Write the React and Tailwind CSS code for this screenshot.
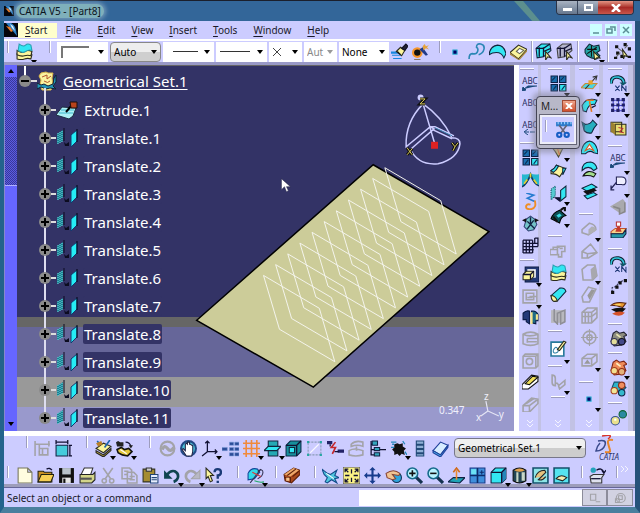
const ink = { fill: "none", stroke: "#111133", strokeWidth: 1.2 };
const gray = { fill: "none", stroke: "#a3a3a8", strokeWidth: 1.5 };
const cyan = { fill: "#33e6f2", stroke: "#10253c", strokeWidth: 1 };
const yellow = { fill: "#fbf59c", stroke: "#2b2b1c", strokeWidth: 1 };
const navy = { fill: "#243a78", stroke: "#0b1a44", strokeWidth: 1 };

const shapes = {
  layers: (
    <>
      <path d="M1 10q4 3 7 1t7 0l-1 4q-3-1-6 0t-7 0z" {...yellow} />
      <path d="M1 7q4 3 7 1t7 0l-1 4q-3-1-6 0t-7-1z" {...yellow} />
      <path d="M3 1q4 3 6 1t5 0l1 5q-3-1-6 1t-7-1z" {...cyan} stroke="#2a9fb0" />
    </>
  ),
  brush: (
    <>
      <path d="M0 8h9v2H0zM1 11h9v1H1zM2 14h8v1H2z" fill="#1787e0" />
      <path d="M5 8l4-4 4 3-3 5z" {...yellow} />
      <path d="M10 5l4-4 2 2-3 4zM6 8l3 3" fill="#223" stroke="#112" />
    </>
  ),
  wizard: (
    <>
      <circle cx="5" cy="9" r="5" fill="#f7962b" />
      <circle cx="5" cy="9" r="3" fill="#111" />
      <path d="M7 6l3-2 5 7-2 1z" fill="#223a88" />
      <path d="M10 3l2-2 1 2 3-1-2 2 2 2-3-1-2 2z" fill="#e5a33b" />
      <path d="M2 15h6v1H2z" fill="#876" />
    </>
  ),
  dot: <path d="M5.500 6.500h4v4h-4z" fill="#000066" stroke="#2fb6d6" />,
  curve: <path d="M1 15q0-5 3-5 4 1 5-2t-1-4q0-4 4-3 4 1 3 5t-5 5" fill="none" stroke="#2b87b5" strokeWidth="1.500" />,
  fan: <path d="M0 11Q1 3 8 2q6 0 8 8l-2 4q-2-5-7-5-4 0-7 2z" {...cyan} />,
  slab: (
    <>
      <path d="M0 9l8-7 8 4-8 9z" {...yellow} />
      <path d="M8 15l8-9v2l-7 8zM0 9l8 6v1L0 11z" fill="#a8873e" />
      <path d="M6 8l3-3 4 2-4 3z" fill="#fff" stroke="#665" />
    </>
  ),
  boxCyan: (
    <>
      <path d="M1 5l5-4h8l1 6-7 6-6 1z" {...cyan} />
      <path d="M4 4v9M8 4v9M1 5h7l6-4M8 8l7-3" {...ink} />
      <path d="M10 8l5 6-3-1-2 3z" {...yellow} />
    </>
  ),
  boxGray: (
    <>
      <path d="M1 5l5-4h8l1 6-7 6-6 1z" fill="#b5b5cc" stroke="#444" />
      <path d="M4 4v9M8 4v9M1 5h7l6-4M8 8l7-3" {...ink} />
      <path d="M10 8l5 6-3-1-2 3z" {...yellow} />
    </>
  ),
  gears: (
    <>
      <path d="M1 6l4-5 4 2 5-1 1 5-3 2 3 3-3 3-5-1-4-2-2-3z" fill="#23a3a5" stroke="#102a3a" />
      <path d="M3 6h9M7 2v11M3 10l9-6" stroke="#111" fill="none" />
      <path d="M9 8l6 6-3 0-2 2z" {...yellow} />
    </>
  ),
  scatter: (
    <>
      <path d="M1 2h3v3H1zM9 0h3v3H9zM13 4h3v3h-3zM2 8h3v3H2zM0 13h3v2H0zM6 11h3v3H6zM13 12h3v2h-3z" fill="#111" />
      <path d="M2 13l4-4M10 5l3-3M4 5l4 3" stroke="#666" />
      <path d="M8 6l5 7-3-1-1 3z" {...yellow} />
    </>
  ),
  windows: (
    <>
      <path d="M1 1h6v6H1zM9 1h6v6H9zM1 9h6v6H1z" fill="#1b6fb0" stroke="#0b1f44" />
      <path d="M9 9h6v6H9z" {...cyan} />
      <path d="M2 5l3-3M10 5l3-3M3 14l3-4M11 14l3-4" stroke="#0b2f55" />
    </>
  ),
  fold: (
    <>
      <path d="M0 3q5 1 8-1 3 2 8 1v10q-5-1-8-7-3 6-8 9z" fill="#26b8cf" />
      <path d="M0 15q5-3 8-12 3 9 8 11" fill="none" stroke="#123a66" strokeWidth="1.500" />
      <path d="M8 2v4M5 8l-3 4M11 8l3 4" stroke="#e9d02c" strokeWidth="1.500" />
    </>
  ),
  squiggle: (
    <>
      <path d="M4 0l7 2-6 3 7 3" fill="none" stroke="#267bd0" strokeWidth="1.500" />
      <path d="M12 7q2 7-3 8-6 1-5-3 1-2 4-1" fill="none" stroke="#ee8e26" strokeWidth="1.800" />
    </>
  ),
  network: (
    <>
      <path d="M4 4l4-3 4 3 2 5-3 5-5 1-4-4z" fill="#74c4c8" stroke="#347" />
      <path d="M5 6l3 3 3-4M8 9l-3 4M8 9l4 4M8 2v7" stroke="#124" strokeWidth="1.300" fill="none" />
      <path d="M0 5l4-2v4zM16 5l-4-2v4z" fill="#111" />
    </>
  ),
  mesh: (
    <path d="M1 3h9M1 6h14M1 9h14M1 12h10M1 15h9M1 3v12M4 3v12M7 3v12M10 3v12M12 1h3v8M12 1v5" {...ink} />
  ),
  pad: (
    <>
      <path d="M3 1h13v14H3z" {...navy} />
      <path d="M5 3h8v8H5z" fill="#fff" />
      <path d="M1 8l3-3h7v5l-3 3H1z" {...yellow} />
      <path d="M1 8h7l3-3M8 8v5" {...ink} />
    </>
  ),
  pocket: (
    <>
      <path d="M1 2h13v12H1zM4 5h7v6H4zM7 8h7" {...gray} />
      <path d="M5 9h5" {...gray} />
    </>
  ),
  shaft: (
    <>
      <path d="M1 4q3-3 6-2v12l-3-2v-2H1z" {...navy} />
      <path d="M9 2q4-1 6 3v6h-2v3l-4-1z" fill="#1f6b86" stroke="#0b1a44" />
      <path d="M8 3h2v11H8zM13 5h2v5h-2z" fill="#f6e58d" />
    </>
  ),
  groove: <path d="M1 4q7-4 14 0v9q-7 3-14 0zM1 4q6 3 14 0M5 8h10M5 11h9M5 8v4" {...gray} />,
  hole: (
    <>
      <path d="M1 4l2-2h12v11l-2 2H1zM1 4h12v11M13 4l2-2" {...gray} />
      <circle cx="7" cy="9" r="3" {...gray} />
    </>
  ),
  rib: (
    <>
      <path d="M0 11l9-9 6 1v5l-9 7H0z" fill="#fff" stroke="#111" />
      <path d="M3 10l7-7 5 1-8 7z" fill="#f0df5a" stroke="#111" />
    </>
  ),
  slot: <path d="M1 10l8-7 6 1v4l-8 8H1zM1 10h6v6M7 10l8-6M4 8l8-5" {...gray} />,
  yellowFold: (
    <>
      <path d="M1 7q3-1 5-5l8 3q-2 4-5 8-3-3-8-3z" {...yellow} />
      <path d="M1 7q3-1 5-5l2 1q-2 4-5 6zM12 5l3 0-3 6z" {...cyan} />
    </>
  ),
  brownFold: (
    <>
      <path d="M1 5l6 2 6-2-5 10-3-5z" fill="#d1bd77" stroke="#443" />
      <path d="M7 7l2 6" stroke="#e3662b" />
    </>
  ),
  translate: (
    <>
      <path d="M1 4l4-3v9l-4 4z" fill="#56cad1" stroke="#156" strokeDasharray="1 1" />
      <path d="M5 12l4 3v-3z" fill="#111133" stroke="#111133" />
      <path d="M10 5l5-4v10l-5 4z" {...cyan} />
    </>
  ),
  extrap: (
    <>
      <path d="M1 11q2-6 8-8l6 5q-5 1-6 7z" fill="#0c4f55" stroke="#000" />
      <path d="M3 9l4 5M10 3l4-3v4" stroke="#111" strokeWidth="2" fill="none" />
      <path d="M6 8l3-2 2 2-3 2z" fill="#38d9e2" />
    </>
  ),
  wallGray: <path d="M0 7h7v5H0zM7 7V4h7v5h-3v5H8v-3M3 7V5h6M9 6h3" {...gray} />,
  roll: (
    <>
      <path d="M1 9l8-7q5-1 6 3l-8 9q-5 2-6-5z" {...cyan} />
      <path d="M1 9q4 0 6 5-6 2-6-5z" {...yellow} />
    </>
  ),
  shellGray: (
    <>
      <path d="M1 2h13v12H1z" fill="#b8b8be" />
      <path d="M4 1v11l3 3V5l7-3v11l-4 2V4" {...gray} stroke="#8f8f96" />
    </>
  ),
  sketch: (
    <>
      <path d="M1 2h12v13H1z" fill="#fff" stroke="#26789a" strokeWidth="1.500" />
      <path d="M3 10q2-5 4-2t-1 4-3-2" fill="none" stroke="#2d7fa6" />
      <path d="M7 9l6-8 2 1-6 8z" {...yellow} />
    </>
  ),
  chainGray: <path d="M2 2v7q0 3 3 3V5q0-3-3-3zM8 12l6-5v4l-5 4zM6 9l3 3" {...gray} />,
  axisSheet: (
    <>
      <path d="M0 12l4-4h11l-4 5z" fill="#49d4e3" stroke="#c78b35" />
      <path d="M4 13L14 2M11 2l4-1-1 4" stroke="#333" fill="none" />
      <path d="M7 5h4v4H7z" fill="#e7a22c" />
    </>
  ),
  sweep: (
    <>
      <path d="M1 8q4-8 14-5l-2 4q-6-1-8 7l-3-1z" {...cyan} />
      <path d="M8 4l2 10M5 3h7" stroke="#e27a25" strokeWidth="1.500" />
      <path d="M10 10l4-2" {...ink} />
    </>
  ),
  fill: (
    <>
      <path d="M1 4l3 2q5 0 7-4l4 4q-3 3-5 8-4 1-7-2z" {...cyan} fill="#25aebe" />
      <path d="M1 4l3 2-1 6z" fill="#0f5f78" />
    </>
  ),
  loft: (
    <>
      <path d="M0 13Q1 2 8 1q7 1 8 12l-4-1q-4-3-8 1z" {...cyan} />
      <path d="M4 10l4-6 4 6-4-2z" fill="#fff" stroke="#d95a1f" />
    </>
  ),
  blend: (
    <>
      <path d="M1 9q0-8 8-8 5 1 6 6l-3 2q-5-6-11 0z" {...cyan} />
      <path d="M2 14q4-7 12-2l-2 3q-4-2-10-1z" fill="#a4df8c" stroke="#111" />
    </>
  ),
  join: (
    <>
      <path d="M1 5l9-4 5 3-9 4z" {...cyan} />
      <path d="M2 8l10-3 3 2-9 4z" fill="#111" />
      <path d="M3 12l9-3 3 2-9 4z" {...cyan} />
    </>
  ),
  filletGray: (
    <>
      <path d="M1 9l7-6q6 1 6 6l-7 5-6-2z" {...gray} />
      <path d="M7 14V9l3-3q4 0 4 4z" fill="#b0b0b4" />
    </>
  ),
  chamferGray: <path d="M1 9l8-7 6 8-8 5H1zM1 9l5 2 9-1M6 11v4" {...gray} />,
  draftGray: (
    <>
      <path d="M1 5l5-4h7l2 10-4 4H2z" {...gray} />
      <path d="M9 5l5-4 1 10-5 4z" fill="#a8a8ae" />
    </>
  ),
  thickGray: (
    <>
      <path d="M1 10l6-9 7 2-6 12H2z" {...gray} />
      <path d="M6 9l4-6 3 1-5 9z" fill="#999" />
    </>
  ),
  cageGray: <path d="M1 5l5-4h9v9l-5 5H1zM1 5h9v10M10 5l5-4M4 5v10M7 5v10M1 9h9l5-4" {...gray} />,
  targetGray: (
    <>
      <circle cx="8" cy="8" r="6" {...gray} />
      <circle cx="8" cy="8" r="2.500" {...gray} />
      <path d="M8 0v16M0 8h16" {...gray} strokeWidth="1" />
    </>
  ),
  crateGray: (
    <>
      <path d="M1 7l5-4h9v7l-5 4H1zM1 7h9v7M10 7l5-4" {...gray} />
      <path d="M3 12l3-4 3 4z" fill="#999" />
    </>
  ),
  repeat: (
    <>
      <path d="M1 8Q1 1 8 2q5 1 5 6" fill="none" stroke="#123" strokeWidth="3.500" />
      <path d="M1 8Q1 1 8 2q5 1 5 6" fill="none" stroke="#2fc4d8" strokeWidth="1.500" />
      <path d="M9 7h7l-4 3z" fill="#156" />
      <path d="M5 10l4 5M9 10l-4 5M11 15v-5l4 5v-5" stroke="#223a77" fill="none" />
    </>
  ),
  pattern: (
    <>
      <path d="M2 3h12M2 8h12M2 13h12M3 2v12M8 2v12M13 2v12" stroke="#44c" />
      <path d="M1 1h3v3H1zM6 1h3v3H6zM11 1h3v3h-3zM1 6h3v3H1zM6 6h3v3H6zM11 6h3v3h-3zM1 11h3v3H1zM6 11h3v3H6zM11 11h3v3h-3z" fill="#202066" />
    </>
  ),
  copySet: (
    <>
      <path d="M1 3h10v9H1zM5 5h10v10H5z" {...yellow} fill="#e7dc74" />
      <path d="M1 3l4 2v10l-4-3z" fill="#9c8230" />
      <path d="M8 8l4 1-3 3 4 1" stroke="#b33" fill="none" />
    </>
  ),
  tag: (
    <>
      <path d="M6 1h5q4 0 4 4t-4 3H6z" fill="#eef" stroke="#225" />
      <path d="M6 6l-5 6M1 9v4h3" {...ink} stroke="#225" />
    </>
  ),
  coneGray: (
    <>
      <path d="M0 8l12-7 2 2v10l-5 1z" fill="#a9a9ad" />
      <path d="M3 8l6 2v5l5-2V4" {...gray} stroke="#888" />
    </>
  ),
  stamp: (
    <>
      <path d="M1 10l4-3h10l-3 5H1z" fill="#f5d48c" stroke="#c3522a" />
      <path d="M1 12h11l3-4v4l-3 4H1z" fill="#2799a8" stroke="#124" />
      <path d="M6 1h4v4H6z" fill="#fff" stroke="#b33" />
      <path d="M7 5h2l2 5H5z" fill="#c43a2b" />
    </>
  ),
  dots: (
    <>
      <path d="M2 13V9l4-1 2-4 6-2" stroke="#335" fill="none" strokeDasharray="2 1" />
      <path d="M1 12h3v3H1zM5 7h3v3H5zM8 3h3v3H8zM13 1h3v3h-3z" fill="#111" />
    </>
  ),
  stack: (
    <>
      <path d="M1 5q4-4 14-2l-3 4q-6-2-11-2z" fill="#e99a2f" stroke="#521" />
      <path d="M1 9q6-3 14-1l-3 3q-5 2-11-2z" fill="#111" />
      <path d="M2 13q6-4 12-1-4 5-12 1z" fill="#d5522a" />
      <path d="M5 4h5v1H5z" fill="#ffe676" />
    </>
  ),
  rocks: (
    <>
      <path d="M3 3l3-2 3 2 4-1 3 3-3 1 2 5-4 3-7 1-3-4z" fill="#8d8d80" stroke="#223" />
      <circle cx="4" cy="11" r="3" fill="#e2dd99" stroke="#335" />
      <circle cx="11" cy="11" r="3" fill="#444a88" stroke="#112" />
      <path d="M6 4l4 3" stroke="#e8e4b0" strokeWidth="1.500" />
    </>
  ),
  rocksOrange: (
    <>
      <path d="M3 3l3-2 3 2 4-1 3 3-3 1 2 5-4 3-7 1-3-4z" fill="#ee8b58" stroke="#7c2415" />
      <circle cx="4" cy="11" r="3" fill="#f3df8f" stroke="#a3401f" />
      <circle cx="11" cy="12" r="3" fill="#e4b27a" stroke="#8d2f18" />
      <path d="M6 4l4 3" stroke="#fff0c0" strokeWidth="1.500" />
    </>
  ),
  rocksCyan: (
    <>
      <path d="M4 2l5 0 6 5-3 3-7 1-3-4z" fill="#2db5ca" stroke="#14506b" />
      <circle cx="4" cy="10" r="3" fill="#f1e596" stroke="#a3401f" />
      <circle cx="11" cy="5" r="3" fill="#f08f5f" stroke="#8d2f18" />
      <circle cx="11" cy="12" r="3" fill="#34b9cc" stroke="#124" />
    </>
  ),
  spheres: (
    <>
      <circle cx="5" cy="11" r="4" fill="#eae08b" stroke="#33508c" />
      <circle cx="12" cy="5" r="3.500" fill="#2a8aa0" stroke="#163" />
      <path d="M4 9h2v2H4z" fill="#fff" />
    </>
  ),
  dimGray: <path d="M1 4h14M1 1v14M5 4v10M5 8h8v6H5zM8 8v6M14 1v5" {...gray} />,
  dim: (
    <>
      <path d="M1 5h11v10H1z" fill="#45cbdc" stroke="#124" />
      <path d="M1 2h11M1 0v4M12 0v4M14 5v10M13 5h3M13 15h3" {...ink} />
    </>
  ),
  book: (
    <>
      <path d="M1 8l7-5 7 3-7 6z" {...yellow} />
      <path d="M1 10l7 4 7-6v2l-7 6-7-4z" fill="#b6a13a" stroke="#222" />
      <path d="M9 7l5-7M2 1l3 3" stroke="#1a64b0" strokeWidth="1.500" />
      <path d="M1 3l5-2 1 3-4 2z" fill="#b97f28" />
    </>
  ),
  swap: (
    <>
      <path d="M0 2l2-1 2 1 3 0v4H1z" fill="#222" />
      <path d="M9 2q4 0 5 4" {...ink} />
      <path d="M12 5h4l-2 3z" fill="#222" />
      <path d="M1 9l4-2 3 2 4-1 3 3-4 4-5-1-4-2z" fill="#e2c73c" stroke="#111" strokeWidth="1.500" />
      <path d="M4 9l6 4" stroke="#fff" />
    </>
  ),
  swirl: (
    <>
      <circle cx="8" cy="8" r="6.500" {...gray} strokeWidth="2" />
      <path d="M3 9q2-5 5-1t6-1" {...gray} strokeWidth="3" />
    </>
  ),
  hand: (
    <>
      <circle cx="8" cy="8" r="7" fill="#4fc8dd" stroke="#234a86" strokeWidth="2" />
      <path d="M6 15l-4-6 1-1 2 2V4l1-1 1 1V2h2v2h1l1 1 1 0v6l-1 4z" fill="#fff" stroke="#224" />
    </>
  ),
  axes: <path d="M6 11V1M6 11h9M6 11l-5 4M4 3l2-2 2 2M13 9l2 2-2 2" {...ink} />,
  tree: (
    <path d="M0 7h5v3H0zM7 2h4v3H7zM12 2h4v3h-4zM7 7h4v3H7zM12 7h4v3h-4zM7 12h4v3H7zM12 12h4v3h-4z" fill="#2c4d99" stroke="#7a9ad8" strokeWidth="0.500" />
  ),
  grid: <path d="M3 0v16M8 0v16M13 0v16M0 3h16M0 8h16M0 13h16" fill="none" stroke="#f08a3c" strokeWidth="1.500" />,
  plane: (
    <>
      <path d="M4 1h9v14H4z" {...cyan} fill="#25a9b4" />
      <path d="M0 10l4-4h12l-4 4z" {...cyan} />
    </>
  ),
  cube: (
    <>
      <path d="M1 5l4-4h10v10l-4 4H1z" fill="#178f9c" stroke="#0b2c48" />
      <path d="M4 7h5v5H4z" {...cyan} />
      <path d="M1 5h10v10M11 5l4-4" {...ink} />
    </>
  ),
  box: (
    <>
      <path d="M1 5l4-4h10v10l-4 4H1z" {...cyan} />
      <path d="M11 5l4-4v10l-4 4z" fill="#2487bb" />
      <path d="M1 5h10v10M11 5l4-4" {...ink} />
    </>
  ),
  frame: (
    <>
      <path d="M2 2h12v12H2z" fill="none" stroke="#8a9ab8" strokeDasharray="2 1" />
      <path d="M1 1h2v2H1zM13 1h2v2h-2zM1 13h2v2H1zM13 13h2v2h-2z" fill="#28a7a4" />
      <path d="M4 12l8-8" stroke="#f8f8ff" />
    </>
  ),
  flow: (
    <>
      <path d="M0 1h5v3H0zM10 9h6v3h-6z" fill="#226" />
      <path d="M3 4v2M7 11h4" {...ink} />
      <path d="M8 2L4 7h4l-3 6" stroke="#c4262b" fill="none" strokeWidth="1.500" />
    </>
  ),
  stackGray: <path d="M3 4q4-4 11-2v4q-5-2-11 0zM1 10q5-3 13 0v4q-7 2-13 0zM8 6v4" {...gray} />,
  nodes: (
    <>
      <path d="M2 1v13h4M2 4h4M2 9h4M9 9h7" {...ink} />
      <path d="M3 1h5v4H3zM5 7h5v3H5zM5 12h5v3H5z" fill="#33a6bc" stroke="#124" />
    </>
  ),
  splat: (
    <>
      <path d="M4 4l3-1 2 1 3-1 0 3 3 2-2 2 1 4-3-1-2 2-2-2-3 1 0-3-2-2 2-2z" fill="#111" />
      <path d="M1 2h5M2 4h2M1 7h3M12 1l2 3M14 11l2 3" stroke="#2288bb" strokeWidth="1.200" />
    </>
  ),
  list: <path d="M5 1h7v3H5zM5 5h7v3H5zM5 9h7v3H5zM5 13h7v2H5z" fill="#8fb0d6" stroke="#224a77" />,
  eraser: (
    <>
      <path d="M1 10l7-8 7 3-7 9z" fill="#d7ecff" stroke="#1f3f99" />
      <path d="M1 10v2l7 4 7-9V5l-7 9z" fill="#4bb2e8" stroke="#1f3f99" />
    </>
  ),
  newFile: <path d="M2 1h9l4 4v10H2zM11 1v4h4" fill="#fffde0" stroke="#77775a" />,
  open: (
    <>
      <path d="M1 4h5l1 1h7v9H1z" fill="#c98f22" stroke="#221" />
      <path d="M1 14l3-7h12l-3 7z" fill="#f7cf54" stroke="#221" />
      <path d="M9 2q3-2 5 1" {...ink} />
    </>
  ),
  save: (
    <>
      <path d="M1 1h14v14H1z" fill="#111" />
      <path d="M4 1h8v6H4z" fill="#b9c2c9" />
      <path d="M4 10h8v5H4z" fill="#e6e6e6" />
      <path d="M5 11h2v4H5z" fill="#111" />
    </>
  ),
  print: (
    <>
      <path d="M5 1h8l-2 6H2z" fill="#fff" stroke="#333" />
      <path d="M1 7h12l2-2v7l-3 3H1z" fill="#d3d58a" stroke="#222" />
      <path d="M1 10h11v2H1z" fill="#555" />
    </>
  ),
  cut: (
    <>
      <path d="M3 1l7 10M12 1L5 11" {...gray} />
      <circle cx="4" cy="13" r="2" {...gray} />
      <circle cx="11" cy="13" r="2" {...gray} />
    </>
  ),
  copy: <path d="M1 1h7l2 2v8H1zM6 5h6l3 3v7H6zM3 4h4M3 7h3M8 9h5M8 12h5" {...gray} />,
  paste: (
    <>
      <path d="M1 2h11v12H1z" fill="#a58c32" stroke="#332" />
      <path d="M4 1h5v3H4z" fill="#ccc" stroke="#333" />
      <path d="M8 7h7v8H8z" fill="#e8f0ff" stroke="#247" />
      <path d="M9 10h5M9 12h5" stroke="#247" />
    </>
  ),
  undo: (
    <>
      <path d="M4 7q3-4 7-3 4 2 3 6-1 3-4 4" fill="none" stroke="#0f4450" strokeWidth="2.500" />
      <path d="M1 3v8h8z" fill="#0f4450" />
    </>
  ),
  redo: (
    <>
      <path d="M12 7q-3-4-7-3-4 2-3 6 1 3 4 4" {...gray} strokeWidth="2.500" />
      <path d="M15 3v8H7z" fill="#b8b8c4" stroke="#a3a3a8" />
    </>
  ),
  help: (
    <>
      <path d="M1 1l7 7-3 0 2 5-2 1-2-5-2 2z" {...yellow} />
      <path d="M9 5q0-3 3-3t3 3-3 3v3M12 13v2" fill="none" stroke="#1a3a77" strokeWidth="2.200" />
    </>
  ),
  measure: (
    <>
      <path d="M1 6q3-6 9-4l2 3-5 6-6 1z" fill="#33d9e8" stroke="#149" />
      <path d="M3 15L13 2M10 4q5-3 5 1t-5 6" fill="none" stroke="#335" />
      <path d="M5 5l8 4" stroke="#d33" />
      <path d="M7 13q5 2 9 1" stroke="#2a6" fill="none" />
    </>
  ),
  material: (
    <>
      <path d="M1 7l9-6 6 2v4l-8 8-6-2z" fill="#a8481c" stroke="#5a1e08" />
      <path d="M1 7l9-6 5 2-8 6z" fill="#eda869" />
      <path d="M4 8l8-6M2 10h5v4M9 9l6-5" stroke="#5a1e08" fill="none" />
      <path d="M3 10h3v3H3z" fill="#f6c48c" />
    </>
  ),
  fly: (
    <>
      <path d="M0 2l5 4 3 1 6-4-2 5 4 2-4 1 2 4-5-3-4 3-2-1 2-4-3-3z" fill="#4fc6dd" stroke="#124a88" />
      <path d="M4 6l7 5" stroke="#fff" />
    </>
  ),
  fit: (
    <>
      <path d="M0 0h16v16H0z" fill="#fcf486" stroke="#446" />
      <path d="M2 5V2h3M11 2h3v3M14 11v3h-3M5 14H2v-3M2 2l3 3M14 2l-3 3M14 14l-3-3M2 14l3-3M8 2v4M8 10v4M2 8h4M10 8h4" {...ink} />
    </>
  ),
  pan: <path d="M8 0l3 3H9v4h4V5l3 3-3 3V9H9v4h2l-3 3-3-3h2V9H3v2L0 8l3-3v2h4V3H5z" fill="#173c8d" />,
  rotate: (
    <>
      <circle cx="11" cy="10" r="4.500" fill="#2da4dd" stroke="#135" />
      <path d="M1 6q7-5 13 0l-1 2-6-1 3 4-3 1-5-2z" fill="#f1c493" stroke="#843" />
    </>
  ),
  zoomIn: (
    <>
      <path d="M9 9l6 6" stroke="#15324f" strokeWidth="3" />
      <circle cx="6" cy="6" r="5" fill="#b8f3ff" stroke="#176b8c" strokeWidth="1.500" />
      <path d="M3 6h6M6 3v6" stroke="#111" strokeWidth="1.500" />
    </>
  ),
  zoomOut: (
    <>
      <path d="M9 9l6 6" stroke="#15324f" strokeWidth="3" />
      <circle cx="6" cy="6" r="5" fill="#b8f3ff" stroke="#176b8c" strokeWidth="1.500" />
      <path d="M3 6h6" stroke="#111" strokeWidth="1.500" />
    </>
  ),
  normal: (
    <>
      <path d="M0 14l5-4h11l-5 5z" fill="#1fa5b6" stroke="#124" />
      <path d="M8 12V3" stroke="#ec8a2c" strokeWidth="1.500" />
      <path d="M5 5l3-4 3 4" fill="none" stroke="#d06a1a" strokeWidth="1.500" />
    </>
  ),
  multi: (
    <>
      <path d="M1 1h14v14H1z" fill="#3f8fdc" stroke="#163a86" />
      <path d="M2 2h5v5H2z" fill="#6be1f4" />
      <path d="M8 1v14M1 8h14" stroke="#0d2c6a" strokeWidth="1.500" />
      <path d="M10 5h4M12 3v4" stroke="#0d2c6a" />
    </>
  ),
  shaded: (
    <>
      <path d="M2 3q6-4 12 0v10q-6 4-12 0z" fill="#245" stroke="#111" />
      <path d="M5 5h2v9H5zM10 5h3v8h-3z" fill="#c9d7c7" />
      <path d="M3 3q5-3 10 0-5 3-10 0z" fill="#e2a04b" />
    </>
  ),
  hide: (
    <>
      <path d="M1 1h14v14H1z" fill="#8ee5e6" stroke="#14506b" strokeWidth="1.500" />
      <path d="M3 10q2-7 9-7l1 2-7 7q4 1 7-3" fill="#e5c27e" stroke="#222" />
    </>
  ),
  swapSpace: (
    <>
      <path d="M1 1h14v14H1z" fill="#55e3ef" stroke="#14506b" strokeWidth="1.500" />
      <path d="M3 11q4-5 10-1l-4 3z" fill="#f2ecb0" stroke="#222" />
    </>
  ),
  catalog: (
    <>
      <path d="M1 9l3-2h10l-2 3v5H2z" fill="#dfe2ee" stroke="#333" />
      <path d="M2 11h9" {...ink} />
      <circle cx="4" cy="3" r="2.500" fill="#23a3bb" />
      <path d="M7 3q5-3 7 2M12 3l2 3 2-3" {...ink} />
    </>
  ),
  trim: (
    <>
      <path d="M1 1h15v4H1z" fill="#2f7ccc" />
      <path d="M3 1v2M6 1v2M9 1v2M12 1v2M15 1v2" stroke="#9ad0ff" />
      <path d="M4 4l6 8M11 4l-6 8" stroke="#667" strokeWidth="1.500" />
      <circle cx="4" cy="13" r="2" fill="none" stroke="#165dc4" strokeWidth="2" />
      <circle cx="11" cy="13" r="2" fill="none" stroke="#165dc4" strokeWidth="2" />
    </>
  ),
  pip: <path d="M2 3h7v8H2zM9 13h6" {...gray} />,
  globe: (
    <>
      <circle cx="9" cy="8" r="6" {...gray} />
      <path d="M6 5h5v5H6zM2 9h5v5H2z" {...gray} />
    </>
  ),
};

function Icon({ name, className = "size-[17px]" }) {
  return (
    <svg viewBox="0 0 16 16" className={`${className} shrink-0`} aria-hidden="true">
      {shapes[name]}
    </svg>
  );
}

function Arrow({ className = "" }) {
  return (
    <svg viewBox="0 0 6 4" className={`h-[4px] w-[6px] shrink-0 ${className}`} aria-hidden="true">
      <path d="M0 0h6L3 4z" fill="currentColor" />
    </svg>
  );
}

function Grip({ className = "" }) {
  return <span className={`h-[12px] w-[2px] shrink-0 self-start border-l border-[#9d9dbd] bg-white ${className}`} />;
}

function Divider() {
  return <span className="w-[2px] shrink-0 self-stretch border-l border-[#9d9dbd] bg-white" />;
}

function Tool({ name, menu }) {
  return (
    <button type="button" aria-label={name} className="relative flex h-[22px] w-[21px] shrink-0 items-center justify-center">
      <Icon name={name} />
      {menu && <Arrow className="absolute -bottom-[1px] -right-[2px] z-10" />}
    </button>
  );
}

function Tools({ items }) {
  return items.map((item) => <Tool key={item} name={item.replace("+", "")} menu={item.endsWith("+")} />);
}

function Combo({ label, value = "", width, children, look = "bg-white", arrow = "text-black" }) {
  return (
    <div className={`relative h-[20px] shrink-0 ${width}`}>
      <select aria-label={label} className={`block h-full w-full appearance-none pl-[3px] text-[10px] leading-[18px] outline-none ${look}`}>
        <option aria-label={label}>{value}</option>
      </select>
      <span className="pointer-events-none absolute inset-0 flex items-center justify-between pl-[4px] pr-[4px]">
        <span className="flex flex-1 items-center">{children}</span>
        <Arrow className={arrow} />
      </span>
    </div>
  );
}

function Planet({ className }) {
  return (
    <svg viewBox="0 0 14 14" className={`shrink-0 ${className}`} aria-hidden="true">
      <path d="M0 0h14v14H0z" fill="#05060c" />
      <path d="M2 0h5q4 2 5 7l1 6q-4-5-6-7T2 0z" fill="#2e7fc4" />
      <path d="M2 3l4 1 3 4-2 1z" fill="#e87b28" />
      <path d="M6 1l3 2 2 5-3-3z" fill="#d8eef8" />
    </svg>
  );
}

const menus = ["Start", "File", "Edit", "View", "Insert", "Tools", "Window", "Help"];

function TitleBar() {
  return (
    <header className="flex h-[21px] shrink-0 items-center border-t border-[#1b1f2c] bg-[#336699] pl-[4px] pr-[6px]">
      <Planet className="size-[10px]" />
      <h1 className="ml-[2px] rounded-full bg-[#7fb0bb] px-[3px] text-[10px] leading-[14px] text-[#0c1420] shadow-[0_0_4px_2px_#7399b8]">
        CATIA V5 - [Part8]
      </h1>
      <div className="flex-1" />
      <div className="mr-4 h-full w-[26px] bg-[#5c8f8e] [clip-path:polygon(0_0,35%_0,100%_100%,70%_100%)]" />
      <div className="flex h-[14px] self-start overflow-hidden rounded-b border border-t-0 border-[#2b3346] text-white">
        <button type="button" aria-label="Minimize" className="flex w-[21px] items-center justify-center border-r border-[#39465c] bg-linear-to-b from-[#a9b3c2] to-[#66778e]">
          <span className="mt-1 h-[3px] w-[9px] bg-white" />
        </button>
        <button type="button" aria-label="Maximize" className="flex w-[20px] items-center justify-center bg-linear-to-b from-[#a9b3c2] to-[#66778e]">
          <span className="h-[7px] w-[9px] border-2 border-white" />
        </button>
        <button type="button" aria-label="Close" className="flex w-[35px] items-center justify-center bg-linear-to-b from-[#e39484] via-[#a82a26] to-[#c8564b]">
          <svg viewBox="0 0 10 8" className="h-[8px] w-[10px]">
            <path d="M1 0l8 8M9 0L1 8" stroke="#fff" strokeWidth="2.500" />
          </svg>
        </button>
      </div>
    </header>
  );
}

function MenuBar() {
  return (
    <nav className="flex h-[18px] shrink-0 items-center bg-[#ccccff]">
      <Planet className="size-[14px]" />
      {menus.map((m, i) => (
        <button
          key={m}
          type="button"
          className={`h-[15px] text-[10px] leading-[15px] text-[#1a1a2a] ${i === 0 ? "bg-[#ffffcc] pl-[7px] pr-[10px]" : "px-[8px]"}`}
        >
          <span className="underline underline-offset-2">{m[0]}</span>
          {m.slice(1)}
        </button>
      ))}
      <div className="ml-auto mr-[3px] flex gap-[3px] text-[#5b8f96]">
        {["M3 9h6", "M5 3h5v4M2 5h5v4H2z", "M3 3l6 6M9 3l-6 6"].map((d, i) => (
          <button key={d} type="button" aria-label={["Minimize part", "Restore part", "Close part"][i]} className="size-[12px] bg-[#ccffff]">
            <svg viewBox="0 0 12 12" className="size-full">
              <path d={d} fill="none" stroke="currentColor" strokeWidth="1.500" />
            </svg>
          </button>
        ))}
      </div>
    </nav>
  );
}

function GraphicBar() {
  return (
    <div className="flex h-[26px] shrink-0 items-center overflow-hidden border-b-3 border-t-2 border-b-[#9999c6] border-t-white bg-[#ccccff]">
      <Grip className="ml-[3px] mr-[5px]" />
      <Tool name="layers" menu />
      <Grip className="ml-[14px] mr-[6px]" />
      <Combo label="Fill color" width="w-[51px]">
        <span className="h-[12px] w-[28px] border-l-2 border-t-2 border-[#777]" />
      </Combo>
      <span className="w-[2px]" />
      <Combo label="Transparency" value="Auto" width="w-[51px]" look="rounded border border-[#888] bg-linear-to-b from-50% from-[#eeeeee] to-50% to-[#cfcfcf]" />
      <span className="w-[2px]" />
      <Combo label="Line thickness" width="w-[51px]">
        <span className="ml-[6px] h-px w-[25px] bg-[#333]" />
      </Combo>
      <span className="w-[2px]" />
      <Combo label="Line type" width="w-[51px]">
        <span className="h-px w-[30px] bg-[#333]" />
      </Combo>
      <span className="w-[2px]" />
      <Combo label="Point symbol" width="w-[33px]">
        <svg viewBox="0 0 8 8" className="size-[8px]">
          <path d="M0 0l8 8M8 0L0 8" stroke="#444" />
        </svg>
      </Combo>
      <span className="w-[2px]" />
      <Combo label="Rendering style" value="Aut" width="w-[33px]" look="bg-white text-[#888888]" arrow="text-[#999999]" />
      <span className="w-[2px]" />
      <Combo label="Layer" value="None" width="w-[50px]" />
      <Tool name="brush" />
      <Tool name="wizard" />
      <Grip className="ml-[8px] mr-[4px]" />
      <Tools items={["dot", "curve", "fan", "slab"]} />
      <span className="w-[2px]" />
      <Divider />
      <Tools items={["boxCyan", "boxGray"]} />
      <span className="w-[2px]" />
      <Divider />
      <span className="w-[3px]" />
      <Tool name="gears" menu />
      <span className="w-[4px]" />
      <Divider />
      <span className="w-[3px]" />
      <Tool name="scatter" />
    </div>
  );
}

function ScrollBar() {
  return (
    <div role="scrollbar" aria-controls="tree" aria-orientation="vertical" aria-valuenow="45" className="flex w-[13px] shrink-0 flex-col border-l border-[#8888cc] bg-[#4a4ab4]">
      <button type="button" aria-label="Scroll up" className="flex h-[12px] items-center justify-center bg-[#6666ff]">
        <Arrow className="rotate-180" />
      </button>
      <div className="flex-[108] bg-[repeating-conic-gradient(#5c5ce0_0_25%,#39399a_0_50%)] bg-size-[2px_2px]" />
      <div className="flex-[232] border-t border-[#b0b0ff] bg-[#6666ff]" />
      <button type="button" aria-label="Scroll down" className="flex h-[14px] items-center justify-center bg-[#6666ff]">
        <Arrow />
      </button>
    </div>
  );
}

function Node({ open }) {
  return (
    <svg viewBox="0 0 12 12" className="relative size-[12px] shrink-0" aria-hidden="true">
      <circle cx="6" cy="6" r="6" fill="#8a8a8a" />
      <path d={open ? "M2 6h8" : "M2 6h8M6 2v8"} stroke="#000" strokeWidth="2" />
    </svg>
  );
}

const features = [
  "Extrude.1",
  "Translate.1",
  "Translate.2",
  "Translate.3",
  "Translate.4",
  "Translate.5",
  "Translate.6",
  "Translate.7",
  "Translate.8",
  "Translate.9",
  "Translate.10",
  "Translate.11",
];

function FeatureIcon({ name }) {
  return (
    <svg viewBox="0 0 22 20" className="h-[20px] w-[22px] shrink-0" aria-hidden="true">
      {name.startsWith("Extrude") ? (
        <>
          <path d="M0 15L6 7l14 1-3 8-4 3z" fill="#aef1f5" stroke="#1c2b40" />
          <path d="M3 13h14M5 10h13" stroke="#3cb9cc" />
          <path d="M10 12l6-7" stroke="#000" strokeWidth="2" />
          <path d="M14 2h7v6h-6z" fill="#b8431c" stroke="#1b0f0c" />
        </>
      ) : (
        <>
          <path d="M1 6l6-4v11l-6 3z" fill="#1d7f90" />
          <path d="M2 5v11M4 4v11M6 3v11" stroke="#6fe0e8" strokeDasharray="1 1" />
          <path d="M8 0v13" stroke="#0c0c20" />
          <path d="M8 14l2 2 3-2v4H9z" fill="#0c0c20" />
          <path d="M15 7l6-5v11l-6 6z" fill="#25ecf5" stroke="#123a70" />
          <path d="M21 1v13" stroke="#050515" />
        </>
      )}
    </svg>
  );
}

function Tree() {
  return (
    <div id="tree" className="relative w-fit text-[15px] leading-[20px] text-white">
      <span className="absolute left-[7px] top-0 h-[10px] w-[2px] bg-white" />
      <div className="flex h-[30px] items-center pl-[2px]">
        <Node open />
        <span className="h-[2px] w-[6px] bg-[#ddd]" />
        <svg viewBox="0 0 20 20" className="size-5 shrink-0" aria-hidden="true">
          <path d="M4 2l5-1 2 1 5 0-1 5 1 8-2 4H5l-2-5 1-5-2-4z" fill="#fbf3a0" stroke="#d8b54a" />
          <path d="M5 6l5-2 0 4 4-3M7 10q4 3 6 0" fill="none" stroke="#b4542c" />
          <path d="M0 12l4 2 3-1 4 2 5-2 1-6 2-3v7l-3 4 3 3-6-1-4 1-5-2-4 2z" fill="#2496b8" stroke="#123" />
        </svg>
        <span className="ml-[6px] underline underline-offset-2">Geometrical Set.1</span>
      </div>
      <ul className="relative">
        <span className="absolute -top-2 bottom-[14px] left-[27px] w-[2px] bg-[#ddddee]" />
        {features.map((name) => (
          <li key={name} className="relative flex h-[28px] items-center pl-[22px]">
            <Node />
            <span className="h-[2px] w-[5px] bg-[#ddd]" />
            <FeatureIcon name={name} />
            <span className="ml-[5px] rounded-xs bg-[#333366] px-[1px]">{name}</span>
          </li>
        ))}
      </ul>
    </div>
  );
}

const copies = Array.from({ length: 11 }, (_, i) => i);

function Scene() {
  return (
    <svg viewBox="17 65 498 366" className="absolute inset-0 size-full" aria-label="Part view">
      <path d="M374 164l116 67-176 156-117-67z" fill="#cccc99" stroke="#000" strokeWidth="1.500" />
      {copies.map((i) => (
        <path
          key={i}
          d="M264 275l16 54 55.500 32.500-15.500-53.500z"
          transform={`translate(${i * 12.17} ${i * -10.8})`}
          fill="none"
          stroke="#f4f4ec"
        />
      ))}
      <g fill="none" stroke="#ccccff" strokeWidth="1.500">
        <path d="M424 103q-18 18-17 43l24-20 4 2-24 21M424 103l12 41M424 103q19 13 29 34M431 126h5l19 9M434 129l19 9M453 137q8 0 8 6-2 15-22 20-20 2-28-15" />
      </g>
      <path d="M436 127l17 8" stroke="#3f89b5" />
      <circle cx="421.500" cy="96.500" r="3" fill="#ccccff" />
      <path d="M432 141h7v7h-7z" fill="#dd2222" />
      <g fill="none" stroke="#111" strokeWidth="3">
        <path d="M421 98h5l-5 5h5M408 147l5 7M413 148l-5 6M453 142l3 4 3-4M456 146l-2 4" />
      </g>
      <g fill="none" stroke="#d8c95a" strokeWidth="1">
        <path d="M421 98h5l-5 5h5M408 147l5 7M413 148l-5 6M453 142l3 4 3-4M456 146l-2 4" />
      </g>
      <path d="M282 178v11l3-3 2 5 2-1-2-4h4z" fill="#fff" stroke="#222244" strokeWidth="0.500" />
      <path d="M489 411l-2-10M489 411l11 5M489 411l-7 5" stroke="#e4e4f4" strokeWidth="1.200" />
      <g fill="#f0f0fa" fontSize="10">
        <text x="440" y="414">0.347</text>
        <text x="485" y="400">z</text>
        <text x="500" y="418">y</text>
        <text x="477" y="421">x</text>
      </g>
    </svg>
  );
}

function Viewport() {
  return (
    <main className="relative min-w-0 flex-1 overflow-hidden border-t border-[#666666] bg-[#333366]">
      <div className="absolute inset-0 flex flex-col">
        <div className="flex-[252]" />
        <div className="flex-[10] bg-[#666666]" />
        <div className="flex-[50] bg-[#666699]" />
        <div className="flex-[30] bg-[#999999]" />
        <div className="flex-[24] bg-[#9999cc]" />
      </div>
      <Scene />
      <Tree />
    </main>
  );
}

// each group is [height, icons]; a trailing + adds the flyout arrow
const columns = [
  [
    ["h-[66px]", ["abc", "abc2", "abc3"]],
    ["h-[109px]", ["windows", "fold", "squiggle", "network", "mesh"]],
    ["h-[150px]", ["pad+", "pocket+", "shaft", "groove", "hole", "rib", "slot"]],
  ],
  [
    ["h-[159px] pb-[6px]", ["windows+", "gears", "sweep", "brownFold+", "yellowFold", "translate+", "extrap+"]],
    ["h-[87px]", ["wallGray", "layers", "roll", "shellGray"]],
    ["h-[27px]", ["sketch+"]],
    ["h-[23px]", ["chainGray+"]],
    ["h-[10px]", []],
  ],
  [
    ["h-[137px] pb-[8px]", ["axisSheet+", "sweep+", "fill+", "loft", "blend", "join"]],
    ["h-[160px] pb-[8px]", ["filletGray+", "chamferGray", "draftGray+", "thickGray", "cageGray", "targetGray", "crateGray+"]],
    ["h-[24px]", ["dot+"]],
  ],
  [
    ["h-[69px] pb-[4px]", ["repeat+", "pattern+", "copySet"]],
    ["h-[95px] pb-[4px]", ["abc+", "tag+", "coneGray", "stamp"]],
    ["h-[67px]", ["repeat", "dots", "stack"]],
    ["h-[21px]", ["rocks"]],
    ["h-[42px]", ["rocksOrange+", "rocksCyan"]],
    ["h-[20px]", ["spheres"]],
  ],
];

function ColumnTool({ item }) {
  const name = item.replace("+", "");
  return (
    <button type="button" aria-label={name} className="relative flex min-h-0 w-[20px] flex-1 items-center justify-center">
      {name.startsWith("abc") ? (
        <span className="flex flex-col items-center text-[8px] leading-[8px] text-[#1c2a5c]">
          ABC
          <svg viewBox="0 0 16 6" className="h-[6px] w-[16px]" aria-hidden="true">
            {name === "abc" && <path d="M0 6l1-4 3 3zM2 4l4-3h9" fill="#1c4a7c" stroke="#1c4a7c" />}
            {name === "abc3" && <path d="M6 0L2 3l4 3M2 3h12" fill="none" stroke="#1c4a7c" strokeDasharray="5 1" />}
          </svg>
        </span>
      ) : (
        <Icon name={name} />
      )}
      {item.endsWith("+") && <Arrow className="absolute -bottom-[2px] -right-[2px] z-10" />}
    </button>
  );
}

function SidePanel() {
  return (
    <aside className="grid w-[121px] shrink-0 grid-cols-[22px_34px_28px_30px] overflow-hidden border-l-5 border-r-2 border-l-white border-r-[#9a9abf] bg-[#ccccff]">
      {columns.map((groups, c) => (
        <div key={c} className="flex flex-col items-center bg-linear-to-r from-[#ccccff] from-85% to-[#c2c2e4] to-85%">
          {groups.map(([height, items], g) => (
            <div key={g} className="flex flex-col items-center">
              <span className="my-[3px] h-[2px] w-[14px] self-start border-b border-[#9d9dbd] bg-white" />
              <div className={`flex flex-col ${height}`}>
                {items.map((item) => (
                  <ColumnTool key={item} item={item} />
                ))}
              </div>
            </div>
          ))}
          {c < 3 && (
            <svg viewBox="0 0 6 8" className="mb-[3px] mt-auto h-[8px] w-[6px]" aria-hidden="true">
              <path d="M0 0l3 3 3-3M0 4l3 3 3-3" fill="none" stroke="#f4f4ff" />
            </svg>
          )}
        </div>
      ))}
    </aside>
  );
}

function FloatingToolbar() {
  return (
    <section aria-label="Measure toolbar" className="absolute right-[60px] top-[96px] z-20 w-[44px] rounded-sm border border-[#444455] bg-[#b8b8c8] px-[3px] pb-[4px] shadow-[0_0_5px_4px_#88889999]">
      <div className="flex h-[18px] items-center justify-between text-[10px] text-[#222]">
        <span className="pl-[1px]">M...</span>
        <button type="button" aria-label="Close toolbar" className="flex h-[12px] w-[14px] items-center justify-center border border-[#a04a35] bg-linear-to-b from-[#eda58c] to-[#cf4f2c]">
          <svg viewBox="0 0 8 6" className="h-[6px] w-[8px]">
            <path d="M1 0l6 6M7 0L1 6" stroke="#fff" strokeWidth="2" />
          </svg>
        </button>
      </div>
      <div className="flex h-[29px] items-center border-2 border-[#eeeef8] bg-[#ccccff] outline outline-[#666677]">
        <Grip className="ml-[3px] mr-[6px] mt-[3px]" />
        <Tool name="trim" />
      </div>
    </section>
  );
}

function Logo() {
  return (
    <svg viewBox="0 0 32 26" className="ml-[8px] h-[26px] w-[32px] shrink-0" aria-label="CATIA">
      <path d="M8 1l7-1q3 1-1 4" fill="none" stroke="#d8342b" strokeWidth="1.500" />
      <path d="M4 6q9-2 7 4t-9 6q1-5 4-8" fill="none" stroke="#3a4a8c" strokeWidth="1.500" />
      <path d="M19 5q-6-1-5 3t2 7-5 2" fill="none" stroke="#e8862c" strokeWidth="2" />
      <text x="5" y="25" fontSize="8" fontStyle="italic" fill="#2d376b">
        CATIA
      </text>
    </svg>
  );
}

function BottomBars() {
  return (
    <div className="flex h-[56px] shrink-0 flex-col border-b-3 border-t-5 border-b-[#9d9dba] border-t-white bg-[#ccccff]">
      <div className="flex h-[24px] shrink-0 items-center">
        <Grip className="ml-[22px] mr-[4px]" />
        <Tools items={["dimGray", "dim"]} />
        <Grip className="ml-[12px] mr-[5px]" />
        <Tools items={["book+", "swap+"]} />
        <Grip className="ml-[14px] mr-[6px]" />
        <Tools items={["swirl", "hand", "axes+", "tree", "grid+", "plane+", "cube", "frame", "flow", "stackGray", "nodes", "splat+", "list", "eraser"]} />
        <Combo label="Current body" value="Geometrical Set.1" width="ml-[3px] w-[132px]" look="rounded border border-[#777788] bg-linear-to-b from-50% from-[#f0f0f0] to-50% to-[#cdcdcd]" />
        <Logo />
      </div>
      <div className="flex h-[24px] shrink-0 items-center pt-[6px]">
        <Grip className="ml-[3px] mr-[5px]" />
        <Tools items={["newFile", "open", "save", "print", "cut", "copy", "paste", "undo+", "redo+", "help"]} />
        <Grip className="ml-[13px] mr-[6px]" />
        <Tool name="measure" menu />
        <Grip className="ml-[9px] mr-[4px]" />
        <Tool name="material" />
        <Grip className="ml-[12px] mr-[4px]" />
        <Tools items={["fly", "fit", "pan", "rotate", "zoomIn", "zoomOut", "normal", "multi", "box+", "shaded+", "hide", "swapSpace"]} />
        <Grip className="ml-[9px] mr-[4px]" />
        <Tool name="catalog" />
        <Grip className="ml-[8px] mr-[3px]" />
        <svg viewBox="0 0 8 6" className="h-[6px] w-[8px] self-start" aria-hidden="true">
          <path d="M0 0l3 3-3 3M4 0l3 3-3 3" fill="none" stroke="#f4f4ff" />
        </svg>
      </div>
    </div>
  );
}

function StatusBar() {
  return (
    <footer className="flex h-[20px] shrink-0 items-center border-t border-[#666699] bg-[#ccccff]">
      <output className="flex-1 pl-[3px] text-[10px] leading-[16px] text-[#1a1a2a]">Select an object or a command</output>
      <input aria-label="Power input" className="h-[16px] w-[223px] bg-white text-[10px] outline-none" />
      <button type="button" aria-label="Command list" className="flex h-[17px] w-[25px] items-center justify-center border border-[#8c8c9a] bg-[#d2d2e2]">
        <Icon name="pip" className="size-[12px]" />
      </button>
      <button type="button" aria-label="Dialog" className="mr-[2px] flex h-[17px] w-[26px] items-center justify-center border border-[#8c8c9a] bg-[#d2d2e2]">
        <Icon name="globe" className="size-[12px]" />
      </button>
    </footer>
  );
}

export default function App() {
  return (
    <div className="relative flex h-screen w-full flex-col overflow-hidden bg-[#336699] font-['Noto_Sans',sans-serif]">
      <TitleBar />
      <div className="flex min-h-0 flex-1 flex-col border-b-6 border-l-4 border-r-5 border-b-[#4a7f9e] border-l-[#23638c] border-r-[#26527a]">
        <MenuBar />
        <GraphicBar />
        <div className="flex min-h-0 flex-1">
          <ScrollBar />
          <Viewport />
          <SidePanel />
        </div>
        <BottomBars />
        <StatusBar />
      </div>
      <FloatingToolbar />
    </div>
  );
}
